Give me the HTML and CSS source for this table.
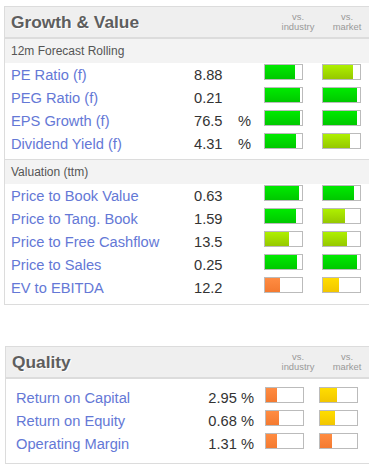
FILE: index.html
```html
<!DOCTYPE html>
<html>
<head>
<meta charset="utf-8">
<link rel="stylesheet" href="styles.css">
</head>
<body>
<section class="panel panel-gv">
  <div class="panel-head">
    <h2 class="title">Growth &amp; Value</h2>
    <div class="vs">vs.<br>industry</div>
    <div class="vs">vs.<br>market</div>
  </div>
  <div class="group">
    <div class="subhead">12m Forecast Rolling</div>
    <div class="row"><span class="label">PE Ratio (f)</span><span class="value">8.88</span><span class="pct"></span><span class="bar"><i class="fill green" style="width:30px"></i></span><span class="bar"><i class="fill lime" style="width:30px"></i></span></div>
    <div class="row"><span class="label">PEG Ratio (f)</span><span class="value">0.21</span><span class="pct"></span><span class="bar"><i class="fill green" style="width:35px"></i></span><span class="bar"><i class="fill green" style="width:34px"></i></span></div>
    <div class="row"><span class="label">EPS Growth (f)</span><span class="value">76.5</span><span class="pct">%</span><span class="bar"><i class="fill green" style="width:35px"></i></span><span class="bar"><i class="fill green" style="width:34px"></i></span></div>
    <div class="row"><span class="label">Dividend Yield (f)</span><span class="value">4.31</span><span class="pct">%</span><span class="bar"><i class="fill green" style="width:31px"></i></span><span class="bar"><i class="fill lime" style="width:27px"></i></span></div>
  </div>
  <div class="group group-last">
    <div class="subhead">Valuation (ttm)</div>
    <div class="row"><span class="label">Price to Book Value</span><span class="value">0.63</span><span class="pct"></span><span class="bar"><i class="fill green" style="width:34px"></i></span><span class="bar"><i class="fill green" style="width:31px"></i></span></div>
    <div class="row"><span class="label">Price to Tang. Book</span><span class="value">1.59</span><span class="pct"></span><span class="bar"><i class="fill green" style="width:31px"></i></span><span class="bar"><i class="fill lime" style="width:22px"></i></span></div>
    <div class="row"><span class="label">Price to Free Cashflow</span><span class="value">13.5</span><span class="pct"></span><span class="bar"><i class="fill lime" style="width:24px"></i></span><span class="bar"><i class="fill lime" style="width:24px"></i></span></div>
    <div class="row"><span class="label">Price to Sales</span><span class="value">0.25</span><span class="pct"></span><span class="bar"><i class="fill green" style="width:32px"></i></span><span class="bar"><i class="fill green" style="width:34px"></i></span></div>
    <div class="row"><span class="label">EV to EBITDA</span><span class="value">12.2</span><span class="pct"></span><span class="bar"><i class="fill orange" style="width:15px"></i></span><span class="bar"><i class="fill yellow" style="width:16px"></i></span></div>
  </div>
</section>

<section class="panel panel-q">
  <div class="panel-head">
    <h2 class="title">Quality</h2>
    <div class="vs">vs.<br>industry</div>
    <div class="vs">vs.<br>market</div>
  </div>
  <div class="qgroup">
    <div class="qrow"><span class="qlabel">Return on Capital</span><span class="qvalue">2.95 %</span><span class="bar"><i class="fill orange" style="width:11px"></i></span><span class="bar"><i class="fill yellow" style="width:17px"></i></span></div>
    <div class="qrow"><span class="qlabel">Return on Equity</span><span class="qvalue">0.68 %</span><span class="bar"><i class="fill orange" style="width:13px"></i></span><span class="bar"><i class="fill yellow" style="width:15px"></i></span></div>
    <div class="qrow"><span class="qlabel">Operating Margin</span><span class="qvalue">1.31 %</span><span class="bar"><i class="fill orange" style="width:11px"></i></span><span class="bar"><i class="fill orange" style="width:12px"></i></span></div>
  </div>
</section>
</body>
</html>
```

FILE: styles.css
```css
html, body {
  margin: 0;
  padding: 0;
  overflow: hidden;
  background: #fff;
}
body {
  padding-top: 6px;
  font-family: Arial, "Liberation Sans", sans-serif;
  font-size: 11pt;
  color: #333;
}
.panel {
  width: 380px;
  border: 1px solid #dcdcdc;
  background: #fff;
}
.panel-gv {
  margin-left: 4px;
}
.panel-q {
  margin-left: 5px;
  margin-top: 41px;
}
.panel-head {
  display: flex;
  height: 30px;
  background: #efefef;
  border-bottom: 2px solid #dcdcdc;
}
.title {
  margin: 0;
  width: 267px;
  padding-left: 6px;
  font-size: 13pt;
  font-weight: bold;
  line-height: 31px;
  color: #5e5e5e;
  text-shadow: 1px 1px 0 #fff;
}
.panel-q .title {
  width: 266px;
}
.vs {
  width: 40px;
  margin-right: 9px;
  padding-top: 5px;
  font-size: 9.4px;
  line-height: 10px;
  color: #999;
  text-align: center;
}
.group {
  padding-bottom: 4px;
}
.group-last {
  border-top: 1px solid #dcdcdc;
  padding-bottom: 5px;
}
.subhead {
  height: 24px;
  line-height: 25px;
  padding-left: 6px;
  background: #f3f3f3;
  font-size: 12px;
  color: #555;
}
.row, .qrow {
  display: flex;
  height: 23px;
  line-height: 25px;
}
.label {
  width: 183px;
  padding-left: 6px;
  color: #6478d6;
  white-space: nowrap;
}
.value {
  width: 44px;
  color: #333;
}
.pct {
  width: 26px;
  color: #333;
}
.bar {
  box-sizing: border-box;
  width: 39px;
  height: 16px;
  margin-top: 1px;
  margin-right: 19px;
  border: 1px solid #bbb;
  background: #fff;
  display: flex;
}
.fill {
  display: block;
  height: 100%;
}
.green { background: linear-gradient(#00ea00, #00c800); }
.lime { background: linear-gradient(#aef000, #96c800); }
.orange { background: linear-gradient(#ff8c42, #f47a30); }
.yellow { background: linear-gradient(#ffdd00, #f2c600); }

.qgroup {
  padding-top: 7px;
  padding-bottom: 8px;
}
.qrow .qlabel {
  width: 176px;
  padding-left: 10px;
  color: #6478d6;
  white-space: nowrap;
}
.qvalue {
  width: 62px;
  text-align: right;
  margin-right: 11px;
  color: #333;
}
.qrow .bar {
  margin-top: 1px;
  margin-right: 15px;
}
```
